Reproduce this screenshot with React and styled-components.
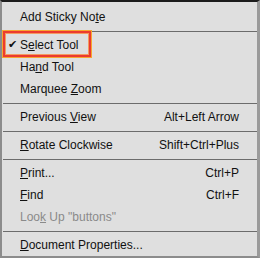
import styled, { createGlobalStyle } from 'styled-components';

const Global = createGlobalStyle`
    html, body {
        margin: 0;
        padding: 0;
        background: #dfdfdf;
    }
    body {
        font-family: 'Liberation Sans', Arial, sans-serif;
    }
`;

const Menu = styled.div`
    width: 260px;
    height: 258px;
    box-sizing: border-box;
    background: #dfdfdf;
    border-top: 2px solid #1c1c1c;
    border-left: 2px solid #8c8c8c;
    border-right: 3px solid #9a9a9a;
    border-bottom: 2px solid #8c8c8c;
    padding-top: 4px;
    display: flex;
    flex-direction: column;
    overflow: hidden;
`;

const Row = styled.div`
    position: relative;
    height: 22px;
    display: flex;
    align-items: center;
    padding: 0 18px 0 18px;
    font-size: 12px;
    color: ${({ disabled }) => (disabled ? '#8a8a8a' : '#111')};
`;

const Check = styled.span`
    position: absolute;
    left: 6px;
    top: 4px;
    font-size: 11px;
    color: #111;
`;

const Label = styled.span`
    flex: 1;
    white-space: nowrap;
    u {
        text-decoration: underline;
        text-underline-offset: 1px;
    }
`;

const Shortcut = styled.span`
    white-space: nowrap;
`;

const Separator = styled.div`
    height: 6px;
    display: flex;
    align-items: center;
    padding: 0 0 0 1px;

    &::after {
        content: '';
        flex: 1;
        height: 1px;
        background: #6c6c6c;
    }
`;

const Highlight = styled.div`
    position: absolute;
    left: 1px;
    top: -3px;
    width: 84px;
    height: 22px;
    border: 2px solid #ec3b2f;
    box-shadow: 0 0 0 1px #f7a530, inset 0 0 0 1px #f49a60;
    pointer-events: none;
`;

const items = [
    { label: <>Add Sticky No<u>t</u>e</> },
    'sep',
    { label: <>S<u>e</u>lect Tool</>, checked: true, highlight: true },
    { label: <>Ha<u>n</u>d Tool</> },
    { label: <>Marquee <u>Z</u>oom</> },
    'sep',
    { label: <>Previous <u>V</u>iew</>, shortcut: 'Alt+Left Arrow' },
    'sep',
    { label: <><u>R</u>otate Clockwise</>, shortcut: 'Shift+Ctrl+Plus' },
    'sep',
    { label: <><u>P</u>rint...</>, shortcut: 'Ctrl+P' },
    { label: <><u>F</u>ind</>, shortcut: 'Ctrl+F' },
    { label: <>Loo<u>k</u> Up "buttons"</>, disabled: true },
    'sep',
    { label: <><u>D</u>ocument Properties...</> },
];

export default function App() {
    return (
        <>
            <Global />
            <Menu>
                {items.map((item, i) =>
                    item === 'sep' ? (
                        <Separator key={i} />
                    ) : (
                        <Row key={i} disabled={item.disabled}>
                            {item.checked && <Check>✔</Check>}
                            <Label>{item.label}</Label>
                            {item.shortcut && (
                                <Shortcut>{item.shortcut}</Shortcut>
                            )}
                            {item.highlight && <Highlight />}
                        </Row>
                    )
                )}
            </Menu>
        </>
    );
}
